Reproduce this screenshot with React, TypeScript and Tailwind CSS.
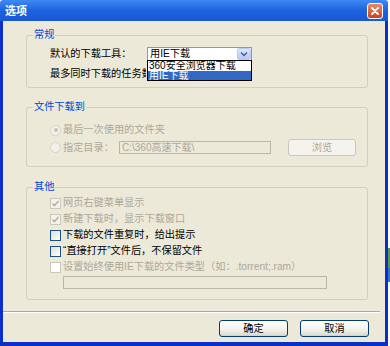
import type { ReactNode } from "react";

const font = "font-['Liberation_Sans','Noto_Sans_CJK_SC',sans-serif]";

function Group({ label, className, children }: { label: string; className: string; children: ReactNode }) {
  return (
    <div className={`relative ml-[23px] w-[342px] rounded-[3px] border border-[#d0d0bf] ${className}`}>
      <span className="absolute -top-[8px] left-[6px] bg-[#ece9d8] px-[1px] text-[10.2px] leading-[14px] text-[#0046d5]">
        {label}
      </span>
      {children}
    </div>
  );
}

function Check({ checked, disabled, label }: { checked?: boolean; disabled?: boolean; label: string }) {
  return (
    <div className="flex h-[14px] items-center gap-[2px] pl-[23px]">
      <span
        className={`flex h-[11px] w-[11px] items-center justify-center border ${
          disabled
            ? checked
              ? "border-[#cac8bb] bg-[#f3f2ec]"
              : "border-[#cac8bb] bg-white"
            : "border-[#1c5180] bg-linear-to-br from-[#dcdcd7] to-white"
        }`}
      >
        {checked && (
          <svg width="9" height="9" viewBox="0 0 9 9">
            <polyline points="1.5,4.5 3.5,6.5 7.5,2" fill="none" stroke="#b5b2a4" strokeWidth="1.6" />
          </svg>
        )}
      </span>
      <span className={`text-[10.2px] leading-[14px] whitespace-nowrap ${disabled ? "text-[#aca899]" : "text-black"}`}>
        {label}
      </span>
    </div>
  );
}

function Radio({ checked }: { checked?: boolean }) {
  return (
    <span className="flex h-[11px] w-[11px] shrink-0 items-center justify-center rounded-full border border-[#d6d3c6] bg-[#f2f0e8]">
      {checked && <span className="h-[4px] w-[4px] rounded-full bg-[#c4c1b3]" />}
    </span>
  );
}

function XpButton({ children }: { children: ReactNode }) {
  return (
    <button className="flex h-[17px] w-[69px] items-center justify-center rounded-[3px] border border-[#003c74] bg-linear-to-b from-white via-[#f5f4ef] to-[#dcd9cd] text-[10.2px] leading-[14px] text-black shadow-[inset_0_-1px_0_#d6d0c5]">
      {children}
    </button>
  );
}

export default function App() {
  return (
    <div className={`flex h-[346px] w-[390px] bg-white ${font}`}>
      <div className="flex w-[388px] flex-col">
        <div className="flex h-[21px] shrink-0 items-center justify-between rounded-t-[3px] bg-linear-to-b from-[#3d8af5] via-[#1f62de] to-[#1a58d4] pl-[5px] pr-[5px]">
          <span className="text-[11px] font-bold leading-[14px] text-white">选项</span>
          <span className="flex h-[16px] w-[16px] items-center justify-center rounded-[3px] border border-white bg-linear-to-b from-[#e8896a] to-[#c6421e]">
            <svg width="10" height="10" viewBox="0 0 10 10">
              <path d="M2 2 L8 8 M8 2 L2 8" stroke="white" strokeWidth="1.8" strokeLinecap="round" />
            </svg>
          </span>
        </div>

        <div className="flex flex-1 flex-col border-x-[3px] border-b-[4px] border-[#0b2fc8] bg-[#ece9d8]">
          <Group label="常规" className="mt-[14px] h-[53px]">
            <div className="mt-[11px] flex h-[14px] items-center pl-[23px]">
              <span className="w-[97px] shrink-0 text-[10.2px] leading-[14px] text-black">默认的下载工具：</span>
              <div className="relative z-10 flex h-[14px] w-[105px] border border-[#7f9db9] bg-white">
                <span className="flex-1 pl-[2px] text-[10.2px] leading-[12px] text-black">用IE下载</span>
                <span className="flex h-[12px] w-[14px] items-center justify-center rounded-[2px] border border-[#b9cbf3] bg-linear-to-b from-[#dde7fd] to-[#b5c9f7]">
                  <svg width="8" height="6" viewBox="0 0 8 6">
                    <polyline points="1,1.5 4,4.5 7,1.5" fill="none" stroke="#4d6185" strokeWidth="1.5" />
                  </svg>
                </span>
                <div className="absolute left-[-1px] top-[12px] w-[105px] border border-black bg-white">
                  <div className="h-[9.5px] overflow-hidden pl-[1px] text-[10px] leading-[9.5px] whitespace-nowrap text-black">360安全浏览器下载</div>
                  <div className="h-[9.5px] overflow-hidden bg-[#316ac5] pl-[1px] text-[10px] leading-[9.5px] whitespace-nowrap text-white">用IE下载</div>
                </div>
              </div>
            </div>
            <div className="mt-[6px] flex h-[14px] items-center pl-[23px]">
              <span className="w-[96px] overflow-hidden text-[10.2px] leading-[14px] whitespace-nowrap text-black">最多同时下载的任务数：</span>
            </div>
          </Group>

          <Group label="文件下载到" className="mt-[19px] h-[60px]">
            <div className="mt-[15px] flex h-[14px] items-center gap-[2px] pl-[23px]">
              <Radio checked />
              <span className="text-[10.2px] leading-[14px] text-[#aca899]">最后一次使用的文件夹</span>
            </div>
            <div className="mt-[2px] flex h-[17px] items-center pl-[23px]">
              <Radio />
              <span className="ml-[2px] w-[56px] shrink-0 text-[10.2px] leading-[14px] text-[#aca899]">指定目录：</span>
              <span className="flex h-[13px] w-[152px] items-center border border-[#b9b7aa] bg-[#ece9d8] pl-[2px] text-[10px] leading-[11px] text-[#aca899]">
                C:\360高速下载\
              </span>
              <span className="ml-[17px] flex h-[17px] w-[68px] items-center justify-center rounded-[3px] border border-[#cac8bb] bg-[#f4f3ee] text-[10.2px] leading-[14px] text-[#aca899]">
                浏览
              </span>
            </div>
          </Group>

          <Group label="其他" className="mt-[20px] h-[113px]">
            <div className="mt-[8px] flex flex-col gap-[2px]">
              <Check checked disabled label="网页右键菜单显示" />
              <Check checked disabled label="新建下载时，显示下载窗口" />
              <Check label="下载的文件重复时，给出提示" />
              <Check label="“直接打开”文件后，不保留文件" />
              <Check disabled label="设置始终使用IE下载的文件类型（如：.torrent;.ram）" />
            </div>
            <div className="ml-[36px] mt-[2px] h-[13px] w-[264px] border border-[#b9b7aa] bg-[#ece9d8]" />
          </Group>

          <div className="mt-[11px] h-[2px] w-[377px] border-t border-b border-t-[#aca899] border-b-white" />

          <div className="mt-[7px] mr-[16px] flex justify-end gap-[12px]">
            <XpButton>确定</XpButton>
            <XpButton>取消</XpButton>
          </div>
        </div>
      </div>
      <div className="flex w-[2px] flex-col">
        <div className="h-[248px]" />
        <div className="h-[20px] bg-[#5a9c3a]" />
        <div className="h-[14px] bg-[#3a6fd0]" />
      </div>
    </div>
  );
}
